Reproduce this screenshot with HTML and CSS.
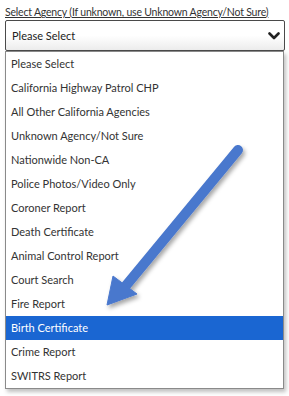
FILE: index.html
```html
<!DOCTYPE html>
<html lang="en">

<head>
    <meta charset="UTF-8">
    <title>Select Agency</title>
    <link rel="stylesheet" href="styles.css">
</head>

<body>
    <div class="field">
        <label class="field-label">Select Agency (If unknown, use Unknown Agency/Not Sure)</label>

        <div class="select-box">
            <span>Please Select</span>
            <svg class="chevron" width="12" height="8" viewBox="0 0 12 8">
                <path d="M1.5 1.5 L6 6 L10.5 1.5" fill="none" stroke="#222" stroke-width="2.6" stroke-linecap="round" stroke-linejoin="round"/>
            </svg>
        </div>

        <ul class="options">
            <li>Please Select</li>
            <li>California Highway Patrol CHP</li>
            <li>All Other California Agencies</li>
            <li>Unknown Agency/Not Sure</li>
            <li>Nationwide Non-CA</li>
            <li>Police Photos/Video Only</li>
            <li>Coroner Report</li>
            <li>Death Certificate</li>
            <li>Animal Control Report</li>
            <li>Court Search</li>
            <li>Fire Report</li>
            <li class="selected">Birth Certificate</li>
            <li>Crime Report</li>
            <li>SWITRS Report</li>
        </ul>
    </div>

    <!-- pointer arrow drawn over the list -->
    <svg class="arrow" width="289" height="396" viewBox="0 0 289 396">
        <defs>
            <filter id="shadow" x="-20%" y="-20%" width="140%" height="140%">
                <feDropShadow dx="2" dy="3" stdDeviation="2" flood-color="#000" flood-opacity="0.35"/>
            </filter>
        </defs>
        <g filter="url(#shadow)" fill="#4a78cd" stroke="#4a78cd">
            <line x1="238" y1="150" x2="124" y2="288" stroke-width="10" stroke-linecap="round"/>
            <polygon points="107,305 113,276 137,294" stroke-width="1" stroke-linejoin="round"/>
        </g>
    </svg>
</body>

</html>
```

FILE: styles.css
```css
* {
    margin: 0;
    padding: 0;
    box-sizing: border-box;
    font-family: 'Lato', 'Liberation Sans', sans-serif;
}

body {
    background-color: white;
    color: #333;
    position: relative;
    width: 289px;
    height: 396px;
    overflow: hidden;
}

.field {
    padding: 5px 5px 0 5px;
}

.field-label {
    display: block;
    font-size: 10.5px;
    letter-spacing: -0.2px;
    color: #333;
    text-decoration: underline;
    line-height: 14px;
    margin-bottom: 1px;
    white-space: nowrap;
}

.select-box {
    display: flex;
    justify-content: space-between;
    align-items: center;
    width: 280px;
    height: 31px;
    padding: 0 4px 0 6px;
    border: 1px solid #4a4a4a;
    border-radius: 2px;
    background: linear-gradient(#ffffff, #ffffff 50%, #ececec);
    font-size: 11px;
    color: #222;
}

.options {
    list-style: none;
    width: 279px;
    border: 1px solid #8a8a8a;
    background-color: white;
    box-shadow: 2px 3px 4px rgba(0, 0, 0, 0.25);
}

.options li {
    height: 24px;
    line-height: 24px;
    padding-left: 5px;
    font-size: 11px;
    color: #333;
}

.options li.selected {
    background-color: #1a66d2;
    color: white;
}

.arrow {
    position: absolute;
    top: 0;
    left: 0;
    pointer-events: none;
}
```
